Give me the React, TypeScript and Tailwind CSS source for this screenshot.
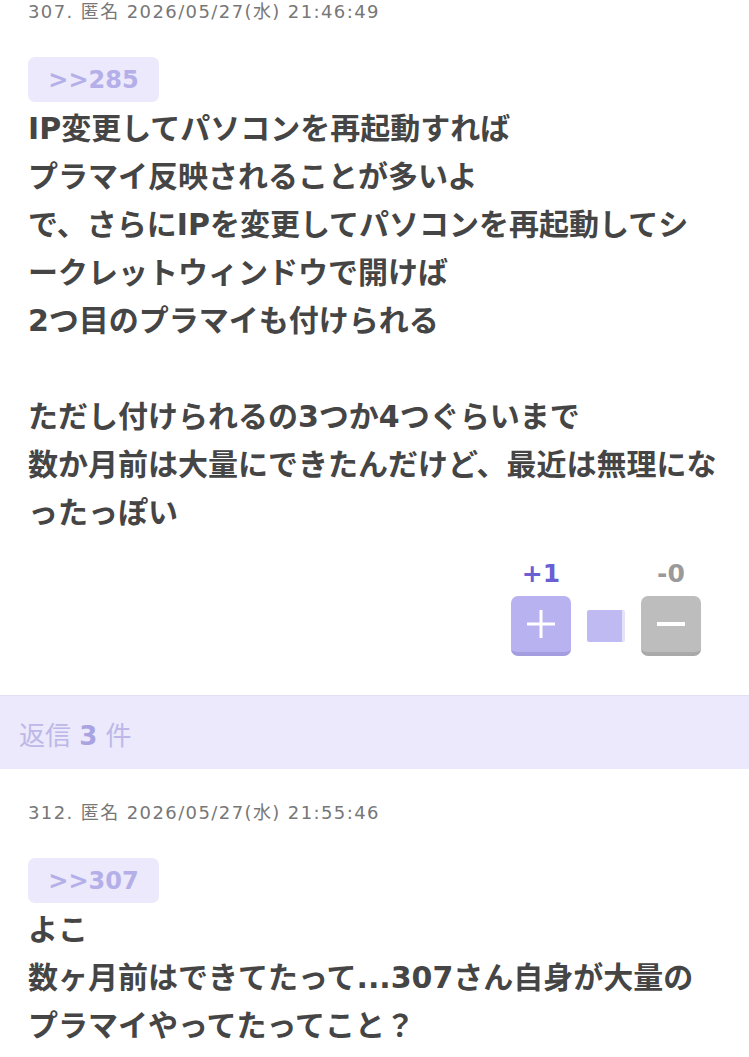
import React from 'react';

const font = { fontFamily: '"DejaVu Sans", "Noto Sans CJK JP", sans-serif' };

type Post = {
  no: number;
  date: string;
  anchor: string;
  lines: string[];
};

// lines are kept as they wrap on screen
const posts: Post[] = [
  {
    no: 307,
    date: '2026/05/27(水) 21:46:49',
    anchor: '>>285',
    lines: [
      'IP変更してパソコンを再起動すれば',
      'プラマイ反映されることが多いよ',
      'で、さらにIPを変更してパソコンを再起動してシ',
      'ークレットウィンドウで開けば',
      '2つ目のプラマイも付けられる',
      '',
      'ただし付けられるの3つか4つぐらいまで',
      '数か月前は大量にできたんだけど、最近は無理にな',
      'ったっぽい',
    ],
  },
  {
    no: 312,
    date: '2026/05/27(水) 21:55:46',
    anchor: '>>307',
    lines: ['よこ', '数ヶ月前はできてたって...307さん自身が大量の', 'プラマイやってたってこと？'],
  },
];

function Votes() {
  return (
    <div className="flex justify-end pr-[48px] mt-[22px]">
      <div className="flex items-end gap-[16px]">
        <div className="flex flex-col items-center">
          <span className="text-[25px] leading-[30px] font-bold text-[#6a5fd3] mb-[7px]">+1</span>
          <button className="w-[60px] h-[60px] rounded-[7px] bg-[#b8b2f0] border-b-[4px] border-[#a49de0] flex items-center justify-center">
            <svg width="30" height="30" viewBox="0 0 30 30">
              <rect x="13.5" y="1" width="3" height="28" fill="#fff" />
              <rect x="1" y="13.5" width="28" height="3" fill="#fff" />
            </svg>
          </button>
        </div>
        <div className="w-[38px] h-[32px] mb-[14px] rounded-[2px] bg-[#c0baf3] border-r-[3px] border-[#e4e1fa]" />
        <div className="flex flex-col items-center">
          <span className="text-[25px] leading-[30px] font-bold text-[#9a9a9a] mb-[7px]">-0</span>
          <button className="w-[60px] h-[60px] rounded-[7px] bg-[#bdbdbd] border-b-[4px] border-[#a9a9a9] flex items-center justify-center">
            <svg width="30" height="30" viewBox="0 0 30 30">
              <rect x="1" y="13" width="28" height="4" fill="#fff" />
            </svg>
          </button>
        </div>
      </div>
    </div>
  );
}

function PostView({ post, first }: { post: Post; first?: boolean }) {
  return (
    <div className={first ? 'pt-0' : 'pt-[32px]'}>
      <div className="px-[28px]">
        <div className="text-[18px] leading-[24px] text-[#777] tracking-[1.4px]">
          {post.no}. 匿名 {post.date}
        </div>
        <div className="mt-[33px] w-[131px] h-[45px] rounded-[7px] bg-[#ebe9fb] flex items-center justify-center">
          <span className="text-[24px] font-bold text-[#b4afe8]">{post.anchor}</span>
        </div>
        <div className="mt-[3px] text-[30px] leading-[48px] font-bold text-[#454545] whitespace-nowrap">
          {post.lines.map((l, i) => (
            <div key={i}>{l === '' ? '\u00a0' : l}</div>
          ))}
        </div>
      </div>
    </div>
  );
}

export default function App() {
  return (
    <div className="w-[749px] h-[1057px] overflow-hidden bg-white" style={font}>
      <PostView post={posts[0]} first />
      <Votes />
      <div className="mt-[39px] h-[74px] bg-[#ebe9fb] border-t border-[#e2e0f2] flex items-center pt-[8px] px-[19px]">
        <span className="text-[26px] text-[#bdb8e8]">
          返信 <span className="font-bold text-[#a9a3e2]">3</span> 件
        </span>
      </div>
      <PostView post={posts[1]} />
    </div>
  );
}
